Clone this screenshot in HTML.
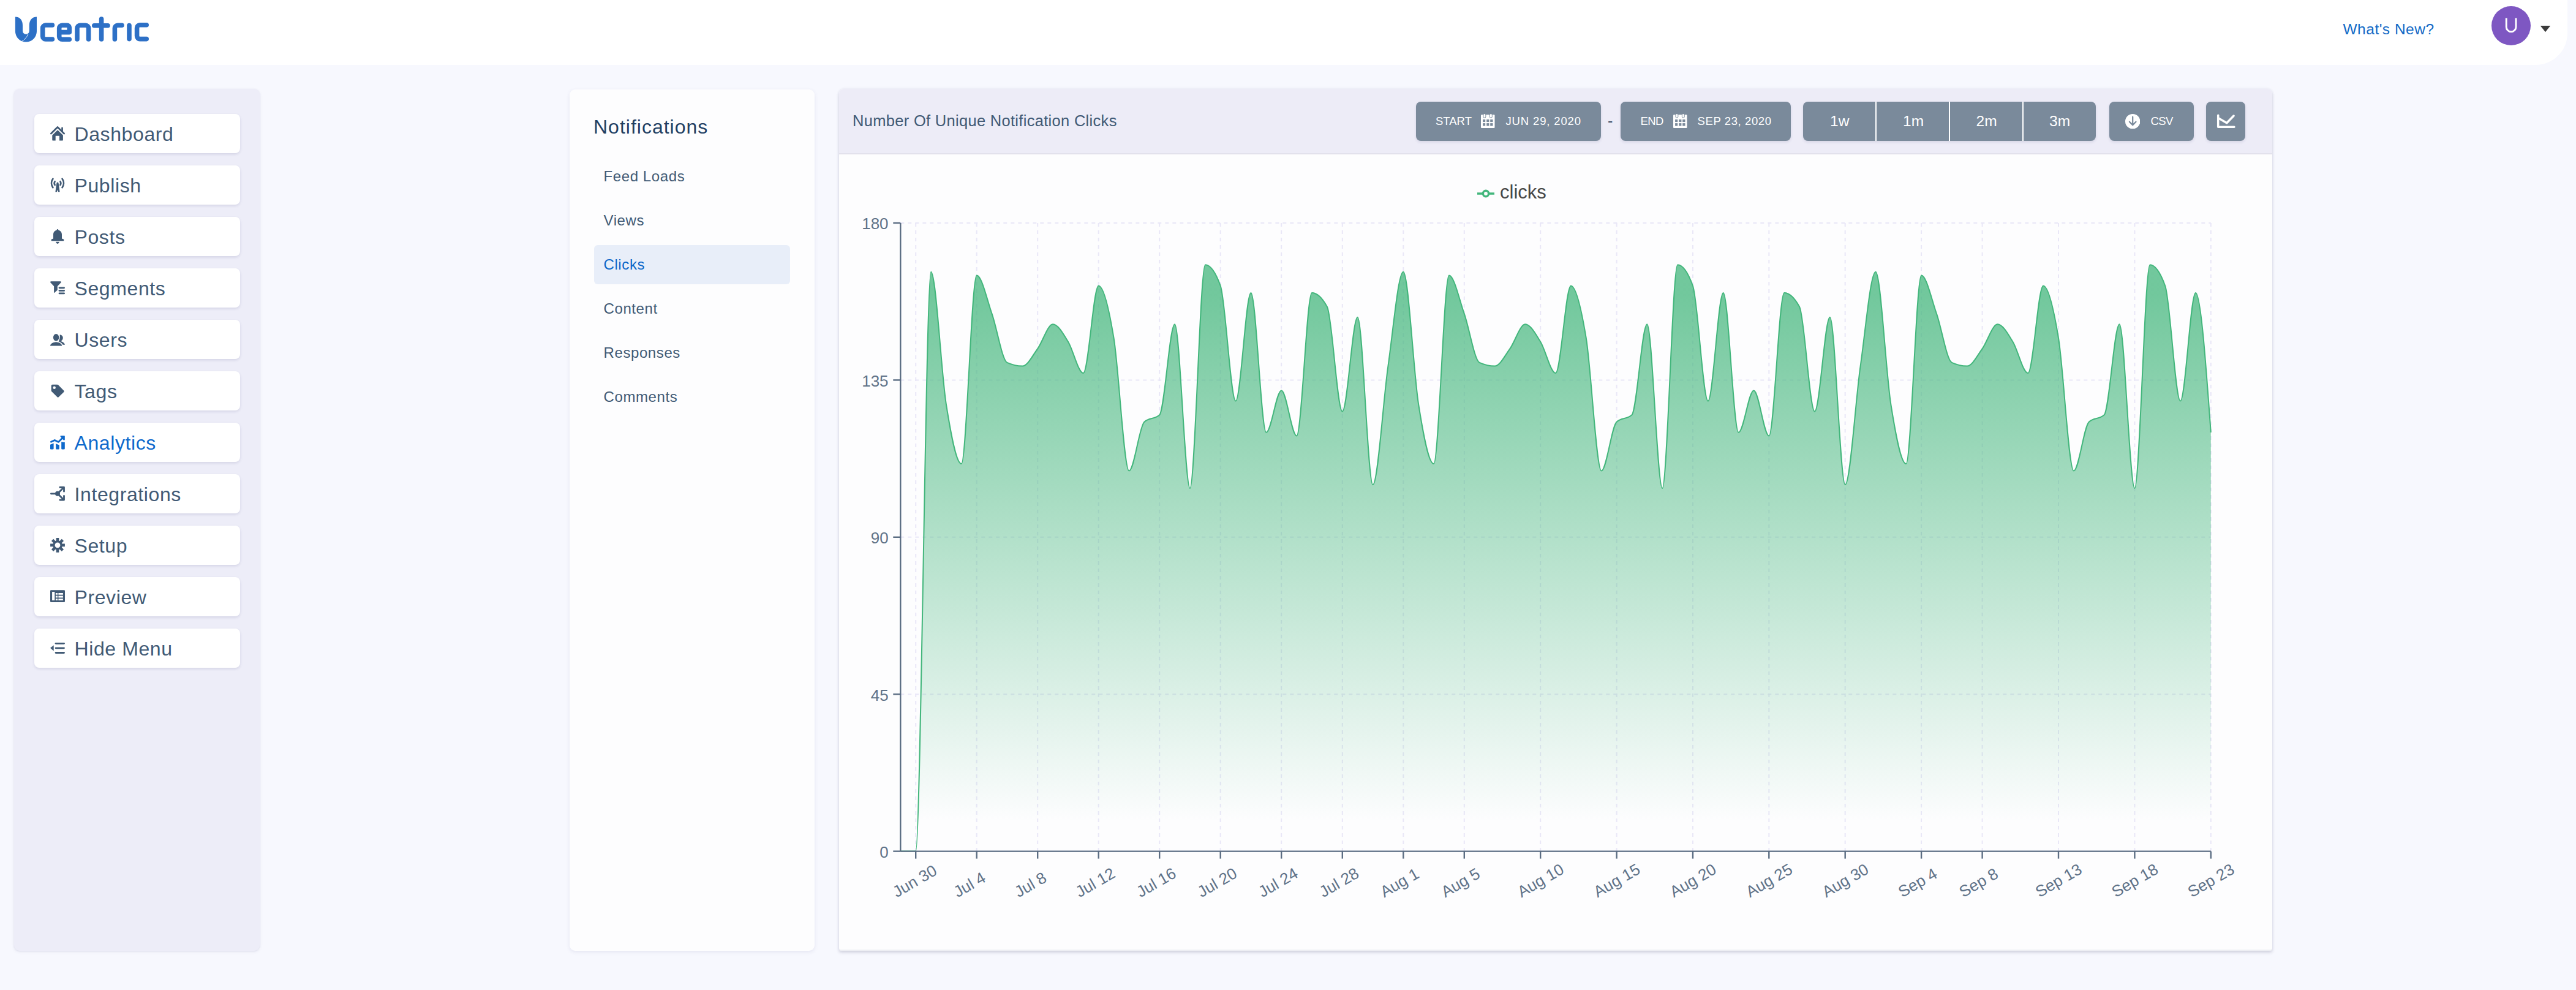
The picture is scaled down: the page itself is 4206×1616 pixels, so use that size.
<!DOCTYPE html><html><head><meta charset="utf-8"><style>
html,body{margin:0;padding:0}
body{width:4206px;height:1616px;overflow:hidden;background:#f7f8fe;position:relative;font-family:"Liberation Sans",sans-serif}
.abs{position:absolute}
.t{position:absolute;white-space:nowrap}
#hdr{position:absolute;left:0;top:0;width:4192px;height:106px;background:#fff;border-bottom-right-radius:52px}
#side{left:23px;top:145px;width:401px;height:1407px;background:#ededf8;border-radius:9px;box-shadow:0 1px 3px rgba(60,60,120,0.10),0 2px 6px rgba(60,60,120,0.05)}
.mbtn{left:56px;width:336px;height:64px;background:#fff;border-radius:8px;box-shadow:0 2px 4px rgba(50,50,110,0.13)}
#npan{left:930px;top:146px;width:400px;height:1406px;background:#fdfdfe;border-radius:9px;box-shadow:0 2px 6px rgba(60,60,130,0.10)}
#cpan{left:1370px;top:145px;width:2340px;height:1407px;background:#eeeff3;border-radius:8px 8px 3px 3px;box-shadow:0 3px 5px rgba(40,40,80,0.16),0 0 4px rgba(60,60,130,0.08);overflow:hidden}
#cbody{position:absolute;left:0;top:0;width:100%;height:1405px;background:#fdfdfe;border-radius:0 0 3px 3px}
#chdr{position:absolute;left:0;top:0;width:100%;height:105px;background:#edecf7;border-bottom:2px solid #e2e1ec}
.sbtn{background:#7a8a9b;border-radius:8px;box-shadow:0 2px 4px rgba(50,50,110,0.12)}
.tk{font-family:"Liberation Sans",sans-serif;font-size:26px;fill:#5f7288}
</style></head><body>
<div id="hdr"></div>
<svg class="abs" style="left:0;top:0" width="260" height="90" viewBox="0 0 260 90">
<g fill="#2d70c6"><path d="M24.9,27.5 Q37,28 37,42 L37,50.5 A5.4,5.4 0 0 0 47.8,50.5 L47.8,42 Q47.8,28 60,27.5 L60,51 A17.55,17.55 0 0 1 24.9,51 Z"/></g>
<path d="M46,55.8 Q42,64 35.5,67.6" stroke="#fff" stroke-width="0.9" fill="none"/>
<g fill="none" stroke="#2d70c6" stroke-width="7.6" stroke-linecap="round" stroke-linejoin="round">
<path d="M85.4,41 H74.5 A4.8,4.8 0 0 0 69.7,45.8 V59.2 A4.8,4.8 0 0 0 74.5,64 H85.4"/>
<path d="M96.7,52.6 H113.3 V45 A3.7,3.7 0 0 0 109.6,41.3 H101.5 A4.8,4.8 0 0 0 96.7,46.1 V59.5 A4.8,4.8 0 0 0 101.5,64.3 H113.3"/>
<path d="M126,64 V46.1 A4.8,4.8 0 0 1 130.8,41.3 H139.8 A4.8,4.8 0 0 1 144.6,46.1 V64"/>
<path d="M165.6,31 V64"/><path d="M153.8,41.8 H176"/>
<path d="M187.4,64 V46.1 A4.8,4.8 0 0 1 192.2,41.3 H199"/>
<path d="M211,41.6 V63.6"/>
<path d="M239.2,40.7 H228.4 A4.8,4.8 0 0 0 223.6,45.5 V58.8 A4.8,4.8 0 0 0 228.4,63.6 H239.2"/>
</g></svg>
<div class="t " style="left:3825.5px;top:35.6px;font-size:24.5px;line-height:24.5px;color:#1169c6;letter-spacing:0.5px">What's New?</div>
<div class="abs" style="left:4068px;top:10px;width:64px;height:64px;border-radius:50%;background:#7e57c2"></div>
<div class="abs" style="left:4068px;top:10px;width:64px;height:64px;"><svg width="64" height="64"><path d="M24.2,19.4 V34 A7.9,7.9 0 0 0 40,34 V19.4" fill="none" stroke="#fff" stroke-width="2.9"/></svg></div>
<svg class="abs" style="left:4140px;top:36px" width="32" height="24"><path d="M7.8,6 H24.2 L16,16.2 Z" fill="#3b3b3b"/></svg>
<div class="abs" id="side"></div>
<div class="abs mbtn" style="top:186px"></div>
<svg class="abs" style="left:82px;top:206px;color:#415a75" width="24" height="24" viewBox="0 0 24 24" fill="#415a75" overflow="visible"><path d="M1.4,12 L12,1.6 L22.6,12" fill="none" stroke="currentColor" stroke-width="2.8" stroke-linecap="round" stroke-linejoin="round"/><rect x="18.2" y="1.5" width="2.7" height="8" rx="1.3"/><path d="M12.1,6.2 L20.9,14.8 V22.4 C20.9,23 20.4,23.5 19.8,23.5 H15 V15.8 H8.7 V23.5 H4.4 C3.8,23.5 3.3,23 3.3,22.4 V14.8 Z"/></svg>
<div class="t " style="left:121.5px;top:202.9px;font-size:32.0px;line-height:32.0px;color:#415a75;letter-spacing:0.6px">Dashboard</div>
<div class="abs mbtn" style="top:270px"></div>
<svg class="abs" style="left:82px;top:290px;color:#415a75" width="24" height="24" viewBox="0 0 24 24" fill="#415a75" overflow="visible"><g fill="none" stroke="currentColor" stroke-width="2.7" stroke-linecap="round"><path d="M4.4,1.9 A12,12 0 0 0 4.4,16.1"/><path d="M19.6,1.9 A12,12 0 0 1 19.6,16.1"/><path d="M7.6,6.1 A5.4,5.4 0 0 0 7.6,11.9"/><path d="M16.4,6.1 A5.4,5.4 0 0 1 16.4,11.9"/></g><path d="M12,7.6 C12.8,7.6 13.4,8.2 13.6,9 L15.6,23.2 H13.1 L12,19.4 L10.9,23.2 H8.4 L10.4,9 C10.6,8.2 11.2,7.6 12,7.6 Z"/></svg>
<div class="t " style="left:121.5px;top:286.9px;font-size:32.0px;line-height:32.0px;color:#415a75;letter-spacing:0.6px">Publish</div>
<div class="abs mbtn" style="top:354px"></div>
<svg class="abs" style="left:82px;top:374px;color:#415a75" width="24" height="24" viewBox="0 0 24 24" fill="#415a75" overflow="visible"><path d="M12,0 C12.8,0 13.2,.6 13.2,1.4 C16.6,2.2 19,4.8 19,9 V15.6 L21.8,16.6 C22.6,17 22.6,19.2 21.8,19.2 H2.2 C1.4,19.2 1.4,17 2.2,16.6 L5,15.6 V9 C5,4.8 7.4,2.2 10.8,1.4 C10.8,.6 11.2,0 12,0 Z M9.2,20.8 H14.8 C14.4,22.6 13.3,23.9 12,23.9 C10.7,23.9 9.6,22.6 9.2,20.8 Z"/></svg>
<div class="t " style="left:121.5px;top:370.9px;font-size:32.0px;line-height:32.0px;color:#415a75;letter-spacing:0.6px">Posts</div>
<div class="abs mbtn" style="top:438px"></div>
<svg class="abs" style="left:82px;top:458px;color:#415a75" width="24" height="24" viewBox="0 0 24 24" fill="#415a75" overflow="visible"><path d="M1.2,1.3 H16.8 C17.8,1.3 18.2,2.6 17.6,3.3 L11.8,9.2 V15.6 L7,19.8 C6.6,20.2 6.1,19.9 6.1,19.4 V9.2 L0.4,3.3 C-0.2,2.6 0.2,1.3 1.2,1.3 Z"/><rect x="13.6" y="10.4" width="10.4" height="2.8" rx="1.4"/><rect x="13.6" y="15" width="10.4" height="2.8" rx="1.4"/><rect x="13.6" y="19.5" width="10.4" height="2.8" rx="1.4"/></svg>
<div class="t " style="left:121.5px;top:454.9px;font-size:32.0px;line-height:32.0px;color:#415a75;letter-spacing:0.6px">Segments</div>
<div class="abs mbtn" style="top:522px"></div>
<svg class="abs" style="left:82px;top:542px;color:#415a75" width="24" height="24" viewBox="0 0 24 24" fill="#415a75" overflow="visible"><ellipse cx="9.6" cy="8.8" rx="4.7" ry="5.9"/><path d="M0,22.4 C0.4,19.4 3.4,17.6 7,16.8 L9.6,16.2 L12.2,16.8 C15.8,17.6 18.8,19.4 19.2,22.4 Z"/><path d="M15.6,4.6 C18.4,4.6 20.8,6.6 20.8,9.6 C20.8,12.6 18.8,14.4 17,15.1 C20,16 23.2,17.6 24,20.8 H20.6 C19.8,19 18.2,17.6 16.4,16.8 L13.6,15.2 C15.6,12.6 16.2,7.6 15.6,4.6 Z"/></svg>
<div class="t " style="left:121.5px;top:538.9px;font-size:32.0px;line-height:32.0px;color:#415a75;letter-spacing:0.6px">Users</div>
<div class="abs mbtn" style="top:606px"></div>
<svg class="abs" style="left:82px;top:626px;color:#415a75" width="24" height="24" viewBox="0 0 24 24" fill="#415a75" overflow="visible"><path fill-rule="evenodd" d="M3.7,1.7 H11.4 C12,1.7 12.6,1.9 13,2.3 L22.1,11.4 C22.8,12.1 22.8,13.2 22.1,13.9 L13.9,22.1 C13.2,22.8 12.1,22.8 11.4,22.1 L2.3,13 C1.9,12.6 1.7,12 1.7,11.4 V3.7 C1.7,2.6 2.6,1.7 3.7,1.7 Z M6.7,4.6 A2.2,2.2 0 1 0 6.7,9 A2.2,2.2 0 1 0 6.7,4.6 Z"/></svg>
<div class="t " style="left:121.5px;top:622.9px;font-size:32.0px;line-height:32.0px;color:#415a75;letter-spacing:0.6px">Tags</div>
<div class="abs mbtn" style="top:690px"></div>
<svg class="abs" style="left:82px;top:710px;color:#0e69cc" width="24" height="24" viewBox="0 0 24 24" fill="#0e69cc" overflow="visible"><path d="M1.4,11.2 L7.3,8.4 L13.4,11.4 L20.4,4.4" fill="none" stroke="currentColor" stroke-width="2.8" stroke-linecap="round" stroke-linejoin="round"/><path d="M16.4,2.2 C16.4,1.6 16.8,1.2 17.4,1.2 H22.8 C23.4,1.2 23.8,1.6 23.8,2.2 V7.6 C23.8,8.8 22.4,9 21.8,8.4 Z"/><path d="M0,15.8 L5.6,13.4 V22 C5.6,23 4.8,23.6 4,23.6 H1.6 C0.6,23.6 0,23 0,22 Z M9.2,14.2 L14.8,16.4 V22 C14.8,23 14.2,23.6 13.2,23.6 H10.8 C9.8,23.6 9.2,23 9.2,22 Z M18.2,11.6 C18.2,11 18.8,10.6 19.4,11.2 L20,11.8 H23.8 V22 C23.8,23 23.2,23.6 22.2,23.6 H19.8 C18.8,23.6 18.2,23 18.2,22 Z"/></svg>
<div class="t " style="left:121.5px;top:706.9px;font-size:32.0px;line-height:32.0px;color:#0e69cc;letter-spacing:0.6px">Analytics</div>
<div class="abs mbtn" style="top:774px"></div>
<svg class="abs" style="left:82px;top:794px;color:#415a75" width="24" height="24" viewBox="0 0 24 24" fill="#415a75" overflow="visible"><g fill="none" stroke="currentColor" stroke-width="2.8" stroke-linecap="round" stroke-linejoin="round"><path d="M1.4,11.8 H10"/><path d="M12,11.8 L21.8,2"/><path d="M12,11.8 L21.8,21.6"/><path d="M15.8,1.5 H22.5 V8.2"/><path d="M15.8,22.1 H22.5 V15.4"/></g><circle cx="12" cy="11.8" r="4"/></svg>
<div class="t " style="left:121.5px;top:790.9px;font-size:32.0px;line-height:32.0px;color:#415a75;letter-spacing:0.6px">Integrations</div>
<div class="abs mbtn" style="top:858px"></div>
<svg class="abs" style="left:82px;top:878px;color:#415a75" width="24" height="24" viewBox="0 0 24 24" fill="#415a75" overflow="visible"><path fill-rule="evenodd" d="M19.36,9.60 L23.90,9.60 L23.90,14.20 L19.36,14.20 L18.83,15.48 L22.04,18.69 L18.79,21.94 L15.58,18.73 L14.30,19.26 L14.30,23.80 L9.70,23.80 L9.70,19.26 L8.42,18.73 L5.21,21.94 L1.96,18.69 L5.17,15.48 L4.64,14.20 L0.10,14.20 L0.10,9.60 L4.64,9.60 L5.17,8.32 L1.96,5.11 L5.21,1.86 L8.42,5.07 L9.70,4.54 L9.70,0.00 L14.30,-0.00 L14.30,4.54 L15.58,5.07 L18.79,1.86 L22.04,5.11 L18.83,8.32 Z M12,7.5 A4.4,4.4 0 1 0 12,16.3 A4.4,4.4 0 1 0 12,7.5 Z"/></svg>
<div class="t " style="left:121.5px;top:874.9px;font-size:32.0px;line-height:32.0px;color:#415a75;letter-spacing:0.6px">Setup</div>
<div class="abs mbtn" style="top:942px"></div>
<svg class="abs" style="left:82px;top:962px;color:#415a75" width="24" height="24" viewBox="0 0 24 24" fill="#415a75" overflow="visible"><path fill-rule="evenodd" d="M1.4,1.3 H22.6 C23.4,1.3 24,1.9 24,2.7 V19.6 C24,20.4 23.4,21 22.6,21 H1.4 C0.6,21 0,20.4 0,19.6 V2.7 C0,1.9 0.6,1.3 1.4,1.3 Z M3.1,4.1 V17.9 H7.3 V4.1 Z M8.9,5.9 V8.8 H12 V5.9 Z M13.4,5.9 V8.8 H20.9 V5.9 Z M8.9,10.4 V13.4 H12 V10.4 Z M13.4,10.4 V13.4 H20.9 V10.4 Z M8.9,15.2 V17.9 H12 V15.2 Z M13.4,15.2 V17.9 H20.9 V15.2 Z"/></svg>
<div class="t " style="left:121.5px;top:958.9px;font-size:32.0px;line-height:32.0px;color:#415a75;letter-spacing:0.6px">Preview</div>
<div class="abs mbtn" style="top:1026px"></div>
<svg class="abs" style="left:82px;top:1046px;color:#415a75" width="24" height="24" viewBox="0 0 24 24" fill="#415a75" overflow="visible"><path d="M0,11.8 L5.7,7.2 V16.4 Z"/><g stroke="currentColor" stroke-width="2.8" stroke-linecap="round"><path d="M9.1,4.3 H22.5"/><path d="M9.1,11.8 H22.5"/><path d="M9.1,19.5 H22.5"/></g></svg>
<div class="t " style="left:121.5px;top:1042.9px;font-size:32.0px;line-height:32.0px;color:#415a75;letter-spacing:0.6px">Hide Menu</div>
<div class="abs" id="npan"></div>
<div class="t " style="left:969.0px;top:190.9px;font-size:32.0px;line-height:32.0px;color:#1f3f63;letter-spacing:1px">Notifications</div>
<div class="abs" style="left:970px;top:400px;width:320px;height:63.5px;border-radius:6px;background:#e8eef9"></div>
<div class="t " style="left:985.5px;top:275.7px;font-size:24.0px;line-height:24.0px;color:#415a75;letter-spacing:0.6px">Feed Loads</div>
<div class="t " style="left:985.5px;top:347.7px;font-size:24.0px;line-height:24.0px;color:#415a75;letter-spacing:0.6px">Views</div>
<div class="t " style="left:985.5px;top:419.7px;font-size:24.0px;line-height:24.0px;color:#0b67c9;letter-spacing:0.6px">Clicks</div>
<div class="t " style="left:985.5px;top:491.7px;font-size:24.0px;line-height:24.0px;color:#415a75;letter-spacing:0.6px">Content</div>
<div class="t " style="left:985.5px;top:563.7px;font-size:24.0px;line-height:24.0px;color:#415a75;letter-spacing:0.6px">Responses</div>
<div class="t " style="left:985.5px;top:635.7px;font-size:24.0px;line-height:24.0px;color:#415a75;letter-spacing:0.6px">Comments</div>
<div class="abs" id="cpan"><div id="cbody"></div><div id="chdr"></div></div>
<div class="t " style="left:1392.0px;top:185.3px;font-size:25.5px;line-height:25.5px;color:#415a75;letter-spacing:0.3px">Number Of Unique Notification Clicks</div>
<div class="abs sbtn" style="left:2312px;top:166px;width:302px;height:64px"></div>
<div class="t " style="left:2344.0px;top:188.6px;font-size:18.5px;line-height:18.5px;color:#fff;letter-spacing:0px">START</div>
<div class="abs" style="left:2418px;top:186px"><svg width="23" height="23" viewBox="0 0 23 23"><rect x="0" y="1.2" width="22.5" height="21.8" rx="1.2" fill="#fff"/><rect x="3.5" y="-1" width="4.8" height="7.8" rx="2.4" fill="#7a8a9b"/><rect x="13.9" y="-1" width="4.8" height="7.8" rx="2.4" fill="#7a8a9b"/><rect x="4.4" y="0" width="3" height="5.8" rx="1.5" fill="#fff"/><rect x="14.8" y="0" width="3" height="5.8" rx="1.5" fill="#fff"/><g fill="#7a8a9b"><rect x="3.1" y="9" width="4.1" height="4.1"/><rect x="9.2" y="9" width="4.2" height="4.1"/><rect x="15.2" y="9" width="4.3" height="4.1"/><rect x="3.1" y="15.1" width="4.1" height="4.4"/><rect x="9.2" y="15.1" width="4.2" height="4.4"/><rect x="15.2" y="15.1" width="4.3" height="4.4"/></g></svg></div>
<div class="t " style="left:2458.5px;top:188.6px;font-size:18.5px;line-height:18.5px;color:#fff;letter-spacing:0.85px">JUN 29, 2020</div>
<div class="t " style="left:2625.0px;top:185.3px;font-size:25.0px;line-height:25.0px;color:#3d4f66;">-</div>
<div class="abs sbtn" style="left:2646px;top:166px;width:278px;height:64px"></div>
<div class="t " style="left:2678.5px;top:188.6px;font-size:18.5px;line-height:18.5px;color:#fff;letter-spacing:-0.6px">END</div>
<div class="abs" style="left:2732px;top:186px"><svg width="23" height="23" viewBox="0 0 23 23"><rect x="0" y="1.2" width="22.5" height="21.8" rx="1.2" fill="#fff"/><rect x="3.5" y="-1" width="4.8" height="7.8" rx="2.4" fill="#7a8a9b"/><rect x="13.9" y="-1" width="4.8" height="7.8" rx="2.4" fill="#7a8a9b"/><rect x="4.4" y="0" width="3" height="5.8" rx="1.5" fill="#fff"/><rect x="14.8" y="0" width="3" height="5.8" rx="1.5" fill="#fff"/><g fill="#7a8a9b"><rect x="3.1" y="9" width="4.1" height="4.1"/><rect x="9.2" y="9" width="4.2" height="4.1"/><rect x="15.2" y="9" width="4.3" height="4.1"/><rect x="3.1" y="15.1" width="4.1" height="4.4"/><rect x="9.2" y="15.1" width="4.2" height="4.4"/><rect x="15.2" y="15.1" width="4.3" height="4.4"/></g></svg></div>
<div class="t " style="left:2771.6px;top:188.6px;font-size:18.5px;line-height:18.5px;color:#fff;letter-spacing:0.6px">SEP 23, 2020</div>
<div class="abs sbtn" style="left:2944px;top:166px;width:478px;height:64px"></div>
<div class="t " style="left:2988.0px;top:185.8px;font-size:24.5px;line-height:24.5px;color:#fff;">1w</div>
<div class="t " style="left:3107.0px;top:185.8px;font-size:24.5px;line-height:24.5px;color:#fff;">1m</div>
<div class="t " style="left:3226.5px;top:185.8px;font-size:24.5px;line-height:24.5px;color:#fff;">2m</div>
<div class="t " style="left:3346.0px;top:185.8px;font-size:24.5px;line-height:24.5px;color:#fff;">3m</div>
<div class="abs" style="left:3062px;top:166px;width:2px;height:64px;background:#fff"></div>
<div class="abs" style="left:3182px;top:166px;width:2px;height:64px;background:#fff"></div>
<div class="abs" style="left:3302px;top:166px;width:2px;height:64px;background:#fff"></div>
<div class="abs sbtn" style="left:3444px;top:166px;width:137.5px;height:64px"></div>
<svg class="abs" style="left:3469.8px;top:186px" width="24.4" height="24.4" viewBox="0 0 24 24"><circle cx="12" cy="12" r="12" fill="#fff"/><path d="M12 4.6V17.4M6.8 12.6L12 17.8 17.2 12.6" stroke="#7a8a9b" stroke-width="2.2" fill="none" stroke-linecap="round" stroke-linejoin="round"/></svg>
<div class="t " style="left:3511.5px;top:189.1px;font-size:18.5px;line-height:18.5px;color:#fff;letter-spacing:-0.6px">CSV</div>
<div class="abs sbtn" style="left:3602px;top:166px;width:64px;height:64px"></div>
<svg class="abs" style="left:3602px;top:166px" width="64" height="64"><path d="M19.7,22.2 V41.3 H45.9 M20.6,27 L33.8,34.8 L45.1,23" stroke="#fff" stroke-width="3.5" fill="none" stroke-linecap="round" stroke-linejoin="round"/></svg>
<svg class="abs" style="left:2412px;top:302px" width="28" height="28" viewBox="0 0 32 32"><path stroke-width="4" fill="none" stroke="#43b67c" d="M0,16h10.666666666666666A5.333333333333333,5.333333333333333,0,1,1,21.333333333333332,16H32M21.333333333333332,16A5.333333333333333,5.333333333333333,0,1,1,10.666666666666668,16"/></svg>
<div class="t " style="left:2449.0px;top:297.6px;font-size:31.0px;line-height:31.0px;color:#474747;">clicks</div>
<svg class="abs" style="left:0;top:0" width="4206" height="1616">
<defs><linearGradient id="ag" x1="0" y1="0" x2="0" y2="1"><stop offset="5%" stop-color="#43b67c" stop-opacity="0.75"/><stop offset="95%" stop-color="#43b67c" stop-opacity="0"/></linearGradient></defs>
<line x1="1470.3" y1="1133.2" x2="3609.8" y2="1133.2" stroke="#e9e7f7" stroke-width="2" stroke-dasharray="6 6"/>
<line x1="1470.3" y1="876.8" x2="3609.8" y2="876.8" stroke="#e9e7f7" stroke-width="2" stroke-dasharray="6 6"/>
<line x1="1470.3" y1="620.4" x2="3609.8" y2="620.4" stroke="#e9e7f7" stroke-width="2" stroke-dasharray="6 6"/>
<line x1="1470.3" y1="364.0" x2="3609.8" y2="364.0" stroke="#e9e7f7" stroke-width="2" stroke-dasharray="6 6"/>
<line x1="1495.2" y1="364.0" x2="1495.2" y2="1389.6" stroke="#e9e7f7" stroke-width="2" stroke-dasharray="6 6"/>
<line x1="1594.7" y1="364.0" x2="1594.7" y2="1389.6" stroke="#e9e7f7" stroke-width="2" stroke-dasharray="6 6"/>
<line x1="1694.2" y1="364.0" x2="1694.2" y2="1389.6" stroke="#e9e7f7" stroke-width="2" stroke-dasharray="6 6"/>
<line x1="1793.7" y1="364.0" x2="1793.7" y2="1389.6" stroke="#e9e7f7" stroke-width="2" stroke-dasharray="6 6"/>
<line x1="1893.2" y1="364.0" x2="1893.2" y2="1389.6" stroke="#e9e7f7" stroke-width="2" stroke-dasharray="6 6"/>
<line x1="1992.7" y1="364.0" x2="1992.7" y2="1389.6" stroke="#e9e7f7" stroke-width="2" stroke-dasharray="6 6"/>
<line x1="2092.2" y1="364.0" x2="2092.2" y2="1389.6" stroke="#e9e7f7" stroke-width="2" stroke-dasharray="6 6"/>
<line x1="2191.8" y1="364.0" x2="2191.8" y2="1389.6" stroke="#e9e7f7" stroke-width="2" stroke-dasharray="6 6"/>
<line x1="2291.3" y1="364.0" x2="2291.3" y2="1389.6" stroke="#e9e7f7" stroke-width="2" stroke-dasharray="6 6"/>
<line x1="2390.8" y1="364.0" x2="2390.8" y2="1389.6" stroke="#e9e7f7" stroke-width="2" stroke-dasharray="6 6"/>
<line x1="2515.2" y1="364.0" x2="2515.2" y2="1389.6" stroke="#e9e7f7" stroke-width="2" stroke-dasharray="6 6"/>
<line x1="2639.6" y1="364.0" x2="2639.6" y2="1389.6" stroke="#e9e7f7" stroke-width="2" stroke-dasharray="6 6"/>
<line x1="2764.0" y1="364.0" x2="2764.0" y2="1389.6" stroke="#e9e7f7" stroke-width="2" stroke-dasharray="6 6"/>
<line x1="2888.3" y1="364.0" x2="2888.3" y2="1389.6" stroke="#e9e7f7" stroke-width="2" stroke-dasharray="6 6"/>
<line x1="3012.7" y1="364.0" x2="3012.7" y2="1389.6" stroke="#e9e7f7" stroke-width="2" stroke-dasharray="6 6"/>
<line x1="3137.1" y1="364.0" x2="3137.1" y2="1389.6" stroke="#e9e7f7" stroke-width="2" stroke-dasharray="6 6"/>
<line x1="3236.6" y1="364.0" x2="3236.6" y2="1389.6" stroke="#e9e7f7" stroke-width="2" stroke-dasharray="6 6"/>
<line x1="3361.0" y1="364.0" x2="3361.0" y2="1389.6" stroke="#e9e7f7" stroke-width="2" stroke-dasharray="6 6"/>
<line x1="3485.4" y1="364.0" x2="3485.4" y2="1389.6" stroke="#e9e7f7" stroke-width="2" stroke-dasharray="6 6"/>
<line x1="3609.8" y1="364.0" x2="3609.8" y2="1389.6" stroke="#e9e7f7" stroke-width="2" stroke-dasharray="6 6"/>
<path d="M1470.30,1389.60C1478.59,1389.60,1486.89,1389.60,1495.18,1389.60C1503.47,1389.60,1511.76,443.73,1520.06,443.73C1528.35,443.73,1536.64,608.02,1544.93,660.26C1553.23,712.49,1561.52,757.12,1569.81,757.12C1578.10,757.12,1586.40,449.43,1594.69,449.43C1602.98,449.43,1611.28,488.37,1619.57,512.11C1627.86,535.85,1636.15,588.08,1644.45,591.88C1652.74,595.68,1661.03,597.58,1669.32,597.58C1677.62,597.58,1685.91,580.48,1694.20,569.09C1702.49,557.69,1710.79,529.20,1719.08,529.20C1727.37,529.20,1735.67,544.40,1743.96,557.69C1752.25,570.99,1760.54,608.97,1768.84,608.97C1777.13,608.97,1785.42,466.52,1793.71,466.52C1802.01,466.52,1810.30,501.66,1818.59,551.99C1826.88,602.33,1835.18,768.52,1843.47,768.52C1851.76,768.52,1860.06,696.34,1868.35,688.75C1876.64,681.15,1884.93,684.95,1893.23,677.35C1901.52,669.75,1909.81,529.20,1918.10,529.20C1926.40,529.20,1934.69,797.01,1942.98,797.01C1951.27,797.01,1959.57,432.34,1967.86,432.34C1976.15,432.34,1984.45,443.73,1992.74,466.52C2001.03,489.32,2009.32,654.56,2017.62,654.56C2025.91,654.56,2034.20,477.92,2042.49,477.92C2050.79,477.92,2059.08,705.84,2067.37,705.84C2075.66,705.84,2083.96,637.46,2092.25,637.46C2100.54,637.46,2108.84,711.54,2117.13,711.54C2125.42,711.54,2133.71,477.92,2142.01,477.92C2150.30,477.92,2158.59,485.52,2166.88,500.71C2175.18,515.91,2183.47,671.65,2191.76,671.65C2200.05,671.65,2208.35,517.81,2216.64,517.81C2224.93,517.81,2233.23,791.31,2241.52,791.31C2249.81,791.31,2258.10,655.51,2266.40,597.58C2274.69,539.65,2282.98,443.73,2291.27,443.73C2299.57,443.73,2307.86,608.02,2316.15,660.26C2324.44,712.49,2332.74,757.12,2341.03,757.12C2349.32,757.12,2357.62,449.43,2365.91,449.43C2374.20,449.43,2382.49,488.37,2390.79,512.11C2399.08,535.85,2407.37,588.08,2415.66,591.88C2423.96,595.68,2432.25,597.58,2440.54,597.58C2448.83,597.58,2457.13,580.48,2465.42,569.09C2473.71,557.69,2482.01,529.20,2490.30,529.20C2498.59,529.20,2506.88,544.40,2515.18,557.69C2523.47,570.99,2531.76,608.97,2540.05,608.97C2548.35,608.97,2556.64,466.52,2564.93,466.52C2573.22,466.52,2581.52,501.66,2589.81,551.99C2598.10,602.33,2606.40,768.52,2614.69,768.52C2622.98,768.52,2631.27,696.34,2639.57,688.75C2647.86,681.15,2656.15,684.95,2664.44,677.35C2672.74,669.75,2681.03,529.20,2689.32,529.20C2697.61,529.20,2705.91,797.01,2714.20,797.01C2722.49,797.01,2730.79,432.34,2739.08,432.34C2747.37,432.34,2755.66,443.73,2763.96,466.52C2772.25,489.32,2780.54,654.56,2788.83,654.56C2797.13,654.56,2805.42,477.92,2813.71,477.92C2822.00,477.92,2830.30,705.84,2838.59,705.84C2846.88,705.84,2855.18,637.46,2863.47,637.46C2871.76,637.46,2880.05,711.54,2888.35,711.54C2896.64,711.54,2904.93,477.92,2913.22,477.92C2921.52,477.92,2929.81,485.52,2938.10,500.71C2946.39,515.91,2954.69,671.65,2962.98,671.65C2971.27,671.65,2979.57,517.81,2987.86,517.81C2996.15,517.81,3004.44,791.31,3012.74,791.31C3021.03,791.31,3029.32,655.51,3037.61,597.58C3045.91,539.65,3054.20,443.73,3062.49,443.73C3070.78,443.73,3079.08,608.02,3087.37,660.26C3095.66,712.49,3103.96,757.12,3112.25,757.12C3120.54,757.12,3128.83,449.43,3137.13,449.43C3145.42,449.43,3153.71,488.37,3162.00,512.11C3170.30,535.85,3178.59,588.08,3186.88,591.88C3195.17,595.68,3203.47,597.58,3211.76,597.58C3220.05,597.58,3228.35,580.48,3236.64,569.09C3244.93,557.69,3253.22,529.20,3261.52,529.20C3269.81,529.20,3278.10,544.40,3286.39,557.69C3294.69,570.99,3302.98,608.97,3311.27,608.97C3319.56,608.97,3327.86,466.52,3336.15,466.52C3344.44,466.52,3352.74,501.66,3361.03,551.99C3369.32,602.33,3377.61,768.52,3385.91,768.52C3394.20,768.52,3402.49,696.34,3410.78,688.75C3419.08,681.15,3427.37,684.95,3435.66,677.35C3443.95,669.75,3452.25,529.20,3460.54,529.20C3468.83,529.20,3477.13,797.01,3485.42,797.01C3493.71,797.01,3502.00,432.34,3510.30,432.34C3518.59,432.34,3526.88,443.73,3535.17,466.52C3543.47,489.32,3551.76,654.56,3560.05,654.56C3568.34,654.56,3576.64,477.92,3584.93,477.92C3593.22,477.92,3601.52,591.88,3609.81,705.84L3609.81,1389.60L1470.30,1389.60Z" fill="url(#ag)" stroke="none"/>
<path d="M1470.30,1389.60C1478.59,1389.60,1486.89,1389.60,1495.18,1389.60C1503.47,1389.60,1511.76,443.73,1520.06,443.73C1528.35,443.73,1536.64,608.02,1544.93,660.26C1553.23,712.49,1561.52,757.12,1569.81,757.12C1578.10,757.12,1586.40,449.43,1594.69,449.43C1602.98,449.43,1611.28,488.37,1619.57,512.11C1627.86,535.85,1636.15,588.08,1644.45,591.88C1652.74,595.68,1661.03,597.58,1669.32,597.58C1677.62,597.58,1685.91,580.48,1694.20,569.09C1702.49,557.69,1710.79,529.20,1719.08,529.20C1727.37,529.20,1735.67,544.40,1743.96,557.69C1752.25,570.99,1760.54,608.97,1768.84,608.97C1777.13,608.97,1785.42,466.52,1793.71,466.52C1802.01,466.52,1810.30,501.66,1818.59,551.99C1826.88,602.33,1835.18,768.52,1843.47,768.52C1851.76,768.52,1860.06,696.34,1868.35,688.75C1876.64,681.15,1884.93,684.95,1893.23,677.35C1901.52,669.75,1909.81,529.20,1918.10,529.20C1926.40,529.20,1934.69,797.01,1942.98,797.01C1951.27,797.01,1959.57,432.34,1967.86,432.34C1976.15,432.34,1984.45,443.73,1992.74,466.52C2001.03,489.32,2009.32,654.56,2017.62,654.56C2025.91,654.56,2034.20,477.92,2042.49,477.92C2050.79,477.92,2059.08,705.84,2067.37,705.84C2075.66,705.84,2083.96,637.46,2092.25,637.46C2100.54,637.46,2108.84,711.54,2117.13,711.54C2125.42,711.54,2133.71,477.92,2142.01,477.92C2150.30,477.92,2158.59,485.52,2166.88,500.71C2175.18,515.91,2183.47,671.65,2191.76,671.65C2200.05,671.65,2208.35,517.81,2216.64,517.81C2224.93,517.81,2233.23,791.31,2241.52,791.31C2249.81,791.31,2258.10,655.51,2266.40,597.58C2274.69,539.65,2282.98,443.73,2291.27,443.73C2299.57,443.73,2307.86,608.02,2316.15,660.26C2324.44,712.49,2332.74,757.12,2341.03,757.12C2349.32,757.12,2357.62,449.43,2365.91,449.43C2374.20,449.43,2382.49,488.37,2390.79,512.11C2399.08,535.85,2407.37,588.08,2415.66,591.88C2423.96,595.68,2432.25,597.58,2440.54,597.58C2448.83,597.58,2457.13,580.48,2465.42,569.09C2473.71,557.69,2482.01,529.20,2490.30,529.20C2498.59,529.20,2506.88,544.40,2515.18,557.69C2523.47,570.99,2531.76,608.97,2540.05,608.97C2548.35,608.97,2556.64,466.52,2564.93,466.52C2573.22,466.52,2581.52,501.66,2589.81,551.99C2598.10,602.33,2606.40,768.52,2614.69,768.52C2622.98,768.52,2631.27,696.34,2639.57,688.75C2647.86,681.15,2656.15,684.95,2664.44,677.35C2672.74,669.75,2681.03,529.20,2689.32,529.20C2697.61,529.20,2705.91,797.01,2714.20,797.01C2722.49,797.01,2730.79,432.34,2739.08,432.34C2747.37,432.34,2755.66,443.73,2763.96,466.52C2772.25,489.32,2780.54,654.56,2788.83,654.56C2797.13,654.56,2805.42,477.92,2813.71,477.92C2822.00,477.92,2830.30,705.84,2838.59,705.84C2846.88,705.84,2855.18,637.46,2863.47,637.46C2871.76,637.46,2880.05,711.54,2888.35,711.54C2896.64,711.54,2904.93,477.92,2913.22,477.92C2921.52,477.92,2929.81,485.52,2938.10,500.71C2946.39,515.91,2954.69,671.65,2962.98,671.65C2971.27,671.65,2979.57,517.81,2987.86,517.81C2996.15,517.81,3004.44,791.31,3012.74,791.31C3021.03,791.31,3029.32,655.51,3037.61,597.58C3045.91,539.65,3054.20,443.73,3062.49,443.73C3070.78,443.73,3079.08,608.02,3087.37,660.26C3095.66,712.49,3103.96,757.12,3112.25,757.12C3120.54,757.12,3128.83,449.43,3137.13,449.43C3145.42,449.43,3153.71,488.37,3162.00,512.11C3170.30,535.85,3178.59,588.08,3186.88,591.88C3195.17,595.68,3203.47,597.58,3211.76,597.58C3220.05,597.58,3228.35,580.48,3236.64,569.09C3244.93,557.69,3253.22,529.20,3261.52,529.20C3269.81,529.20,3278.10,544.40,3286.39,557.69C3294.69,570.99,3302.98,608.97,3311.27,608.97C3319.56,608.97,3327.86,466.52,3336.15,466.52C3344.44,466.52,3352.74,501.66,3361.03,551.99C3369.32,602.33,3377.61,768.52,3385.91,768.52C3394.20,768.52,3402.49,696.34,3410.78,688.75C3419.08,681.15,3427.37,684.95,3435.66,677.35C3443.95,669.75,3452.25,529.20,3460.54,529.20C3468.83,529.20,3477.13,797.01,3485.42,797.01C3493.71,797.01,3502.00,432.34,3510.30,432.34C3518.59,432.34,3526.88,443.73,3535.17,466.52C3543.47,489.32,3551.76,654.56,3560.05,654.56C3568.34,654.56,3576.64,477.92,3584.93,477.92C3593.22,477.92,3601.52,591.88,3609.81,705.84" fill="none" stroke="#43b67c" stroke-width="2"/>
<line x1="1470.3" y1="364.0" x2="1470.3" y2="1389.6" stroke="#5b6d83" stroke-width="2.4"/>
<line x1="1470.3" y1="1389.6" x2="3609.8" y2="1389.6" stroke="#5b6d83" stroke-width="2.4"/>
<line x1="1458.3" y1="1389.6" x2="1470.3" y2="1389.6" stroke="#5b6d83" stroke-width="2.4"/>
<text x="1450.6" y="1400.0" text-anchor="end" class="tk">0</text>
<line x1="1458.3" y1="1133.2" x2="1470.3" y2="1133.2" stroke="#5b6d83" stroke-width="2.4"/>
<text x="1450.6" y="1143.6" text-anchor="end" class="tk">45</text>
<line x1="1458.3" y1="876.8" x2="1470.3" y2="876.8" stroke="#5b6d83" stroke-width="2.4"/>
<text x="1450.6" y="887.2" text-anchor="end" class="tk">90</text>
<line x1="1458.3" y1="620.4" x2="1470.3" y2="620.4" stroke="#5b6d83" stroke-width="2.4"/>
<text x="1450.6" y="630.8" text-anchor="end" class="tk">135</text>
<line x1="1458.3" y1="364.0" x2="1470.3" y2="364.0" stroke="#5b6d83" stroke-width="2.4"/>
<text x="1450.6" y="374.4" text-anchor="end" class="tk">180</text>
<line x1="1495.2" y1="1389.6" x2="1495.2" y2="1401.6" stroke="#5b6d83" stroke-width="2.4"/>
<text x="1464.2" y="1465.4" class="tk" transform="rotate(-30 1464.2 1465.4)">Jun 30</text>
<line x1="1594.7" y1="1389.6" x2="1594.7" y2="1401.6" stroke="#5b6d83" stroke-width="2.4"/>
<text x="1563.7" y="1465.4" class="tk" transform="rotate(-30 1563.7 1465.4)">Jul 4</text>
<line x1="1694.2" y1="1389.6" x2="1694.2" y2="1401.6" stroke="#5b6d83" stroke-width="2.4"/>
<text x="1663.2" y="1465.4" class="tk" transform="rotate(-30 1663.2 1465.4)">Jul 8</text>
<line x1="1793.7" y1="1389.6" x2="1793.7" y2="1401.6" stroke="#5b6d83" stroke-width="2.4"/>
<text x="1762.7" y="1465.4" class="tk" transform="rotate(-30 1762.7 1465.4)">Jul 12</text>
<line x1="1893.2" y1="1389.6" x2="1893.2" y2="1401.6" stroke="#5b6d83" stroke-width="2.4"/>
<text x="1862.2" y="1465.4" class="tk" transform="rotate(-30 1862.2 1465.4)">Jul 16</text>
<line x1="1992.7" y1="1389.6" x2="1992.7" y2="1401.6" stroke="#5b6d83" stroke-width="2.4"/>
<text x="1961.7" y="1465.4" class="tk" transform="rotate(-30 1961.7 1465.4)">Jul 20</text>
<line x1="2092.2" y1="1389.6" x2="2092.2" y2="1401.6" stroke="#5b6d83" stroke-width="2.4"/>
<text x="2061.2" y="1465.4" class="tk" transform="rotate(-30 2061.2 1465.4)">Jul 24</text>
<line x1="2191.8" y1="1389.6" x2="2191.8" y2="1401.6" stroke="#5b6d83" stroke-width="2.4"/>
<text x="2160.8" y="1465.4" class="tk" transform="rotate(-30 2160.8 1465.4)">Jul 28</text>
<line x1="2291.3" y1="1389.6" x2="2291.3" y2="1401.6" stroke="#5b6d83" stroke-width="2.4"/>
<text x="2260.3" y="1465.4" class="tk" transform="rotate(-30 2260.3 1465.4)">Aug 1</text>
<line x1="2390.8" y1="1389.6" x2="2390.8" y2="1401.6" stroke="#5b6d83" stroke-width="2.4"/>
<text x="2359.8" y="1465.4" class="tk" transform="rotate(-30 2359.8 1465.4)">Aug 5</text>
<line x1="2515.2" y1="1389.6" x2="2515.2" y2="1401.6" stroke="#5b6d83" stroke-width="2.4"/>
<text x="2484.2" y="1465.4" class="tk" transform="rotate(-30 2484.2 1465.4)">Aug 10</text>
<line x1="2639.6" y1="1389.6" x2="2639.6" y2="1401.6" stroke="#5b6d83" stroke-width="2.4"/>
<text x="2608.6" y="1465.4" class="tk" transform="rotate(-30 2608.6 1465.4)">Aug 15</text>
<line x1="2764.0" y1="1389.6" x2="2764.0" y2="1401.6" stroke="#5b6d83" stroke-width="2.4"/>
<text x="2733.0" y="1465.4" class="tk" transform="rotate(-30 2733.0 1465.4)">Aug 20</text>
<line x1="2888.3" y1="1389.6" x2="2888.3" y2="1401.6" stroke="#5b6d83" stroke-width="2.4"/>
<text x="2857.3" y="1465.4" class="tk" transform="rotate(-30 2857.3 1465.4)">Aug 25</text>
<line x1="3012.7" y1="1389.6" x2="3012.7" y2="1401.6" stroke="#5b6d83" stroke-width="2.4"/>
<text x="2981.7" y="1465.4" class="tk" transform="rotate(-30 2981.7 1465.4)">Aug 30</text>
<line x1="3137.1" y1="1389.6" x2="3137.1" y2="1401.6" stroke="#5b6d83" stroke-width="2.4"/>
<text x="3106.1" y="1465.4" class="tk" transform="rotate(-30 3106.1 1465.4)">Sep 4</text>
<line x1="3236.6" y1="1389.6" x2="3236.6" y2="1401.6" stroke="#5b6d83" stroke-width="2.4"/>
<text x="3205.6" y="1465.4" class="tk" transform="rotate(-30 3205.6 1465.4)">Sep 8</text>
<line x1="3361.0" y1="1389.6" x2="3361.0" y2="1401.6" stroke="#5b6d83" stroke-width="2.4"/>
<text x="3330.0" y="1465.4" class="tk" transform="rotate(-30 3330.0 1465.4)">Sep 13</text>
<line x1="3485.4" y1="1389.6" x2="3485.4" y2="1401.6" stroke="#5b6d83" stroke-width="2.4"/>
<text x="3454.4" y="1465.4" class="tk" transform="rotate(-30 3454.4 1465.4)">Sep 18</text>
<line x1="3609.8" y1="1389.6" x2="3609.8" y2="1401.6" stroke="#5b6d83" stroke-width="2.4"/>
<text x="3578.8" y="1465.4" class="tk" transform="rotate(-30 3578.8 1465.4)">Sep 23</text></svg>
</body></html>
